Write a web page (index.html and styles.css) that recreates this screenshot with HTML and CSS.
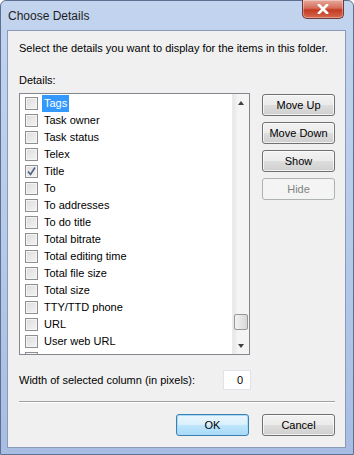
FILE: index.html
```html
<!DOCTYPE html>
<html lang="en">
<head>
    <meta charset="UTF-8" />
    <title>Choose Details</title>
    <link rel="stylesheet" href="styles.css">
</head>
<body>
    <div class="window">
        <div class="titlebar">
            <span class="title">Choose Details</span>
            <button class="close-btn" aria-label="Close">
                <svg width="12" height="10" viewBox="0 0 12 10">
                    <path d="M2 1 L10 9 M10 1 L2 9" stroke="#fff" stroke-width="2.6" stroke-linecap="square" />
                </svg>
            </button>
        </div>

        <div class="client">
            <p class="intro">Select the details you want to display for the items in this folder.</p>
            <p class="label">Details:</p>

            <div class="details-row">
                <div class="listbox">
                    <ul class="items">
                        <li><span class="check"></span><span class="name selected">Tags</span></li>
                        <li><span class="check"></span><span class="name">Task owner</span></li>
                        <li><span class="check"></span><span class="name">Task status</span></li>
                        <li><span class="check"></span><span class="name">Telex</span></li>
                        <li><span class="check checked"><svg width="11" height="11" viewBox="0 0 11 11"><path d="M2 5.5 L4.5 8.5 L9 1.5" fill="none" stroke="#4d6185" stroke-width="1.6" /></svg></span><span class="name">Title</span></li>
                        <li><span class="check"></span><span class="name">To</span></li>
                        <li><span class="check"></span><span class="name">To addresses</span></li>
                        <li><span class="check"></span><span class="name">To do title</span></li>
                        <li><span class="check"></span><span class="name">Total bitrate</span></li>
                        <li><span class="check"></span><span class="name">Total editing time</span></li>
                        <li><span class="check"></span><span class="name">Total file size</span></li>
                        <li><span class="check"></span><span class="name">Total size</span></li>
                        <li><span class="check"></span><span class="name">TTY/TTD phone</span></li>
                        <li><span class="check"></span><span class="name">URL</span></li>
                        <li><span class="check"></span><span class="name">User web URL</span></li>
                        <!-- next row is scrolled out of view, only its checkbox top shows -->
                        <li><span class="check"></span></li>
                    </ul>
                    <div class="scrollbar">
                        <span class="arrow up"></span>
                        <span class="track"><span class="thumb"></span></span>
                        <span class="arrow down"></span>
                    </div>
                </div>

                <div class="side-buttons">
                    <button class="btn">Move Up</button>
                    <button class="btn">Move Down</button>
                    <button class="btn">Show</button>
                    <button class="btn" disabled>Hide</button>
                </div>
            </div>

            <div class="width-row">
                <label for="col-width">Width of selected column (in pixels):</label>
                <input type="text" id="col-width" value="0" />
            </div>

            <hr class="separator" />

            <div class="footer">
                <button class="btn default">OK</button>
                <button class="btn">Cancel</button>
            </div>
        </div>
    </div>
</body>
</html>
```

FILE: styles.css
```css
* {
    margin: 0;
    padding: 0;
    box-sizing: border-box;
    font-family: 'Liberation Sans', Arial, sans-serif;
}

body {
    background-color: #fff;
    width: 354px;
    height: 455px;
    overflow: hidden;
}

.window {
    width: 354px;
    height: 455px;
    border: 1px solid #5f6f8f;
    border-radius: 6px 6px 0 0;
    background: linear-gradient(to bottom, #c2d4ee 0%, #b9cdea 40%, #a8bde3 100%);
    display: flex;
    flex-direction: column;
}

.titlebar {
    height: 29px;
    display: flex;
    justify-content: space-between;
    align-items: flex-start;
    padding-left: 7px;
    padding-right: 9px;
}

.title {
    font-size: 12px;
    line-height: 30px;
    color: #1e1e1e;
}

.close-btn {
    width: 42px;
    height: 19px;
    margin-top: -1px;
    border: 1px solid #6d3a3a;
    border-top: none;
    border-radius: 0 0 5px 5px;
    background: linear-gradient(to bottom, #e7a99c 0%, #d46d5a 45%, #c43a22 55%, #d5694f 100%);
    box-shadow: inset 0 0 0 1px rgba(255, 255, 255, 0.35);
    display: flex;
    justify-content: center;
    align-items: center;
}

.client {
    flex: 1;
    margin: 0 7px 6px 6px;
    background-color: #f0f0f0;
    border: 1px solid #8a9ab8;
    padding: 9px 10px 0 11px;
    font-size: 11px;
    color: #000;
}

.intro,
.label {
    line-height: 16px;
}

.label {
    margin-top: 16px;
}

.details-row {
    display: flex;
    margin-top: 5px;
    gap: 12px;
}

.listbox {
    width: 232px;
    height: 262px;
    border: 1px solid #828790;
    background-color: #fff;
    display: flex;
    overflow: hidden;
}

.items {
    list-style: none;
    flex: 1;
    padding-top: 1px;
    overflow: hidden;
}

.items li {
    height: 17px;
    display: flex;
    align-items: center;
    padding-left: 5px;
}

.check {
    width: 13px;
    height: 13px;
    border: 1px solid #8f8f8f;
    background: linear-gradient(135deg, #dcdcdc 0%, #f4f4f4 100%);
    box-shadow: inset 0 0 0 1px #f4f4f4;
    display: flex;
    justify-content: center;
    align-items: center;
    flex-shrink: 0;
}

.name {
    margin-left: 4px;
    padding: 0 2px;
    line-height: 17px;
}

.name.selected {
    background-color: #3399ff;
    color: #fff;
}

.scrollbar {
    width: 17px;
    background: linear-gradient(to right, #e6e6e6 0%, #f4f4f4 30%, #f4f4f4 100%);
    border-left: 1px solid #ececec;
    display: flex;
    flex-direction: column;
    align-items: center;
}

.arrow {
    height: 17px;
    width: 100%;
    display: flex;
    justify-content: center;
    align-items: center;
}

.arrow::before {
    content: "";
    border-left: 3px solid transparent;
    border-right: 3px solid transparent;
}

.arrow.up::before {
    border-bottom: 4px solid #404040;
}

.arrow.down::before {
    border-top: 4px solid #404040;
}

.track {
    flex: 1;
    width: 100%;
    display: flex;
    flex-direction: column;
    justify-content: flex-end;
    padding-bottom: 7px;
}

.thumb {
    height: 16px;
    margin: 0 1px;
    border: 1px solid #979797;
    border-radius: 2px;
    background: linear-gradient(to right, #f2f2f2 0%, #e6e6e6 50%, #d8d8d8 100%);
}

.side-buttons {
    display: flex;
    flex-direction: column;
    gap: 6px;
    padding-top: 1px;
}

.btn {
    width: 73px;
    height: 22px;
    border: 1px solid #707070;
    border-radius: 3px;
    background: linear-gradient(to bottom, #f2f2f2 0%, #ebebeb 48%, #dddddd 52%, #cfcfcf 100%);
    box-shadow: inset 0 0 0 1px rgba(255, 255, 255, 0.7);
    font-size: 11px;
    color: #000;
}

.btn:disabled {
    border-color: #adb2b5;
    background: #f4f4f4;
    box-shadow: none;
    color: #838383;
}

.btn.default {
    border-color: #3c7fb1;
    background: linear-gradient(to bottom, #eaf6fd 0%, #d9f0fc 48%, #bee6fd 52%, #a7d9f5 100%);
    box-shadow: inset 0 0 0 1px #a9dbf6;
}

.width-row {
    display: flex;
    align-items: center;
    justify-content: space-between;
    width: 232px;
    margin-top: 15px;
}

.width-row label {
    line-height: 16px;
}

.width-row input {
    width: 28px;
    height: 20px;
    border: 1px solid #e2e3ea;
    background-color: #fff;
    text-align: right;
    padding-right: 7px;
    font-size: 11px;
}

.separator {
    border: none;
    border-top: 1px solid #a0a0a0;
    border-bottom: 1px solid #fff;
    width: 316px;
    margin-top: 11px;
}

.footer {
    display: flex;
    justify-content: flex-end;
    gap: 13px;
    width: 316px;
    margin-top: 11px;
}
```
